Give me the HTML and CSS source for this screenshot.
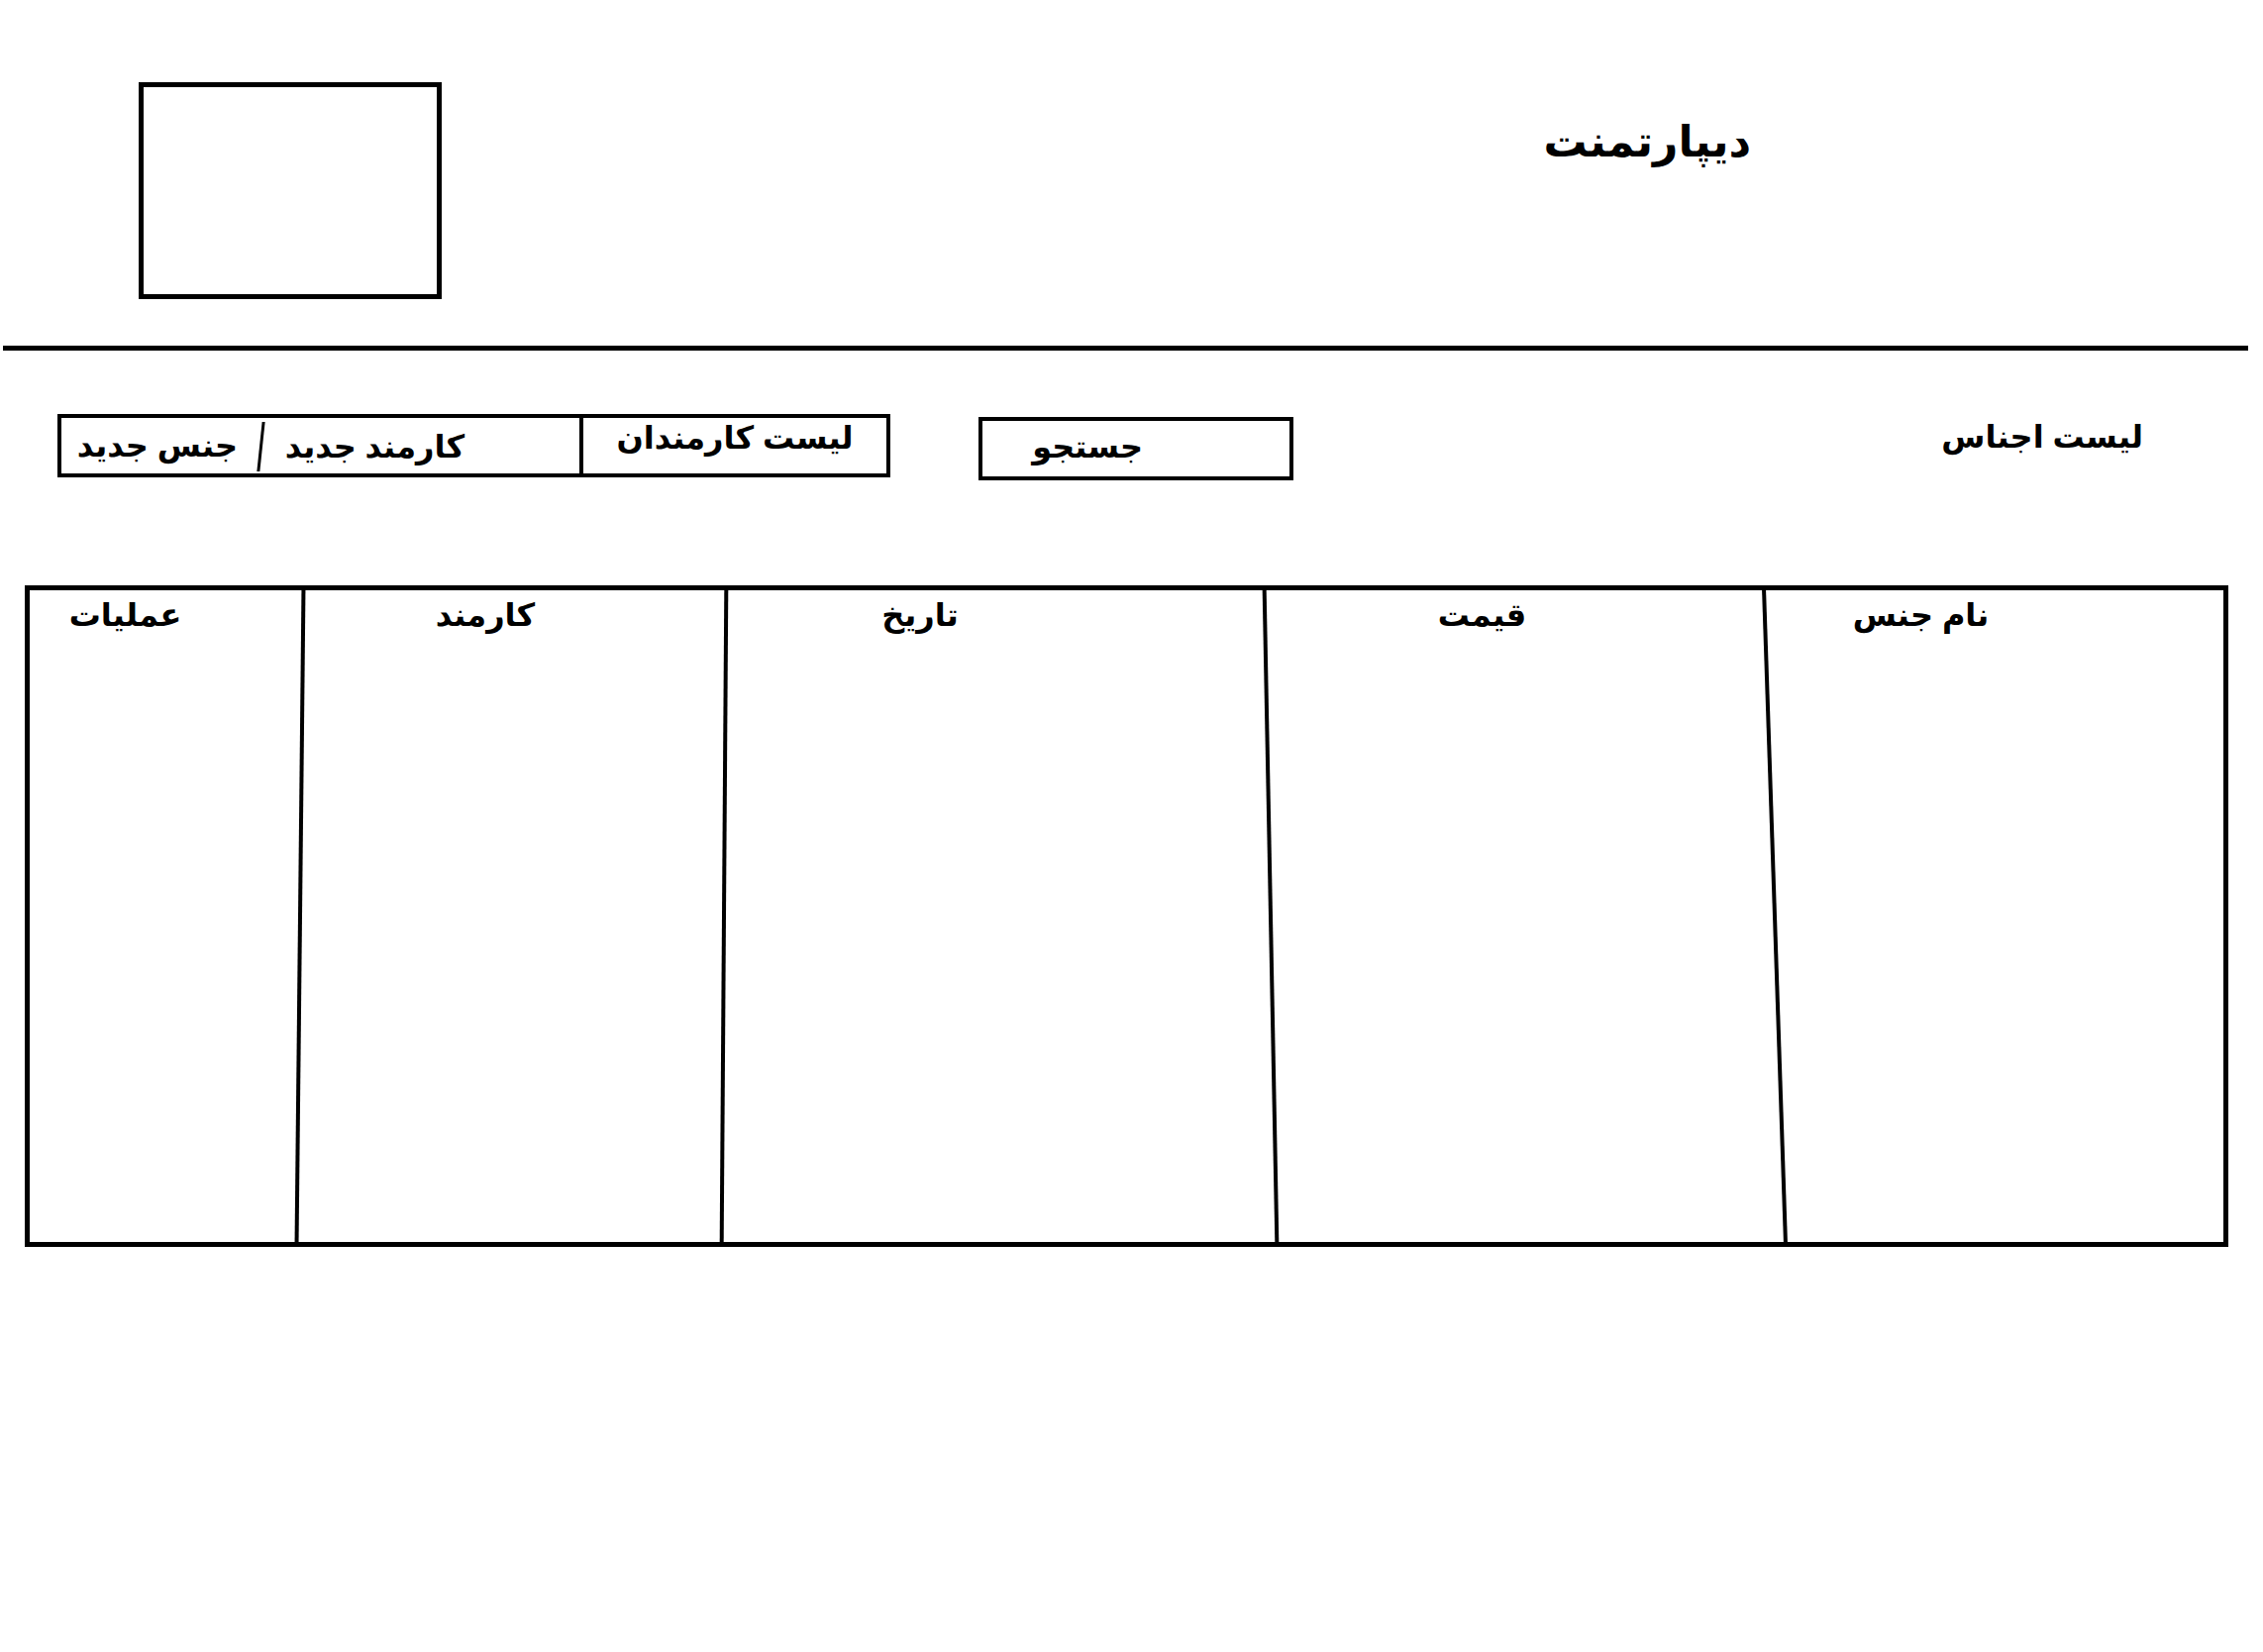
FILE: index.html
```html
<!DOCTYPE html>
<html lang="fa" dir="rtl">
<head>
    <meta charset="UTF-8">
    <meta name="viewport" content="width=device-width, initial-scale=1.0">
    <title>دیپارتمنت</title>
    <link rel="stylesheet" href="styles.css">
</head>
<body>
    <div class="header">
        <h1 class="title">دیپارتمنت</h1>
        <div class="logo"></div>
    </div>
    <div class="rule"></div>

    <div class="toolbar">
        <div class="section-label">لیست اجناس</div>
        <div class="search-box">جستجو</div>
        <div class="btn-group">
            <div class="btn-cell btn-list">لیست کارمندان</div>
            <div class="btn-cell btn-new-staff">کارمند جدید</div>
            <div class="btn-cell btn-new-item">جنس جدید</div>
        </div>
    </div>

    <div class="goods-table">
        <div class="col col-name"><div class="col-title">نام جنس</div></div>
        <div class="col col-price"><div class="col-title">قیمت</div></div>
        <div class="col col-date"><div class="col-title">تاریخ</div></div>
        <div class="col col-staff"><div class="col-title">کارمند</div></div>
        <div class="col col-ops"><div class="col-title">عملیات</div></div>
    </div>
</body>
</html>
```

FILE: styles.css
```css
body {
    margin: 0;
    background-color: #ffffff;
    color: #000000;
    font-family: "Liberation Sans", "DejaVu Sans", sans-serif;
    font-weight: bold;
}

.header {
    display: flex;
    justify-content: space-between;
    align-items: flex-start;
    padding: 83px 517px 0 140px;
}

.title {
    margin: 34px 0 0;
    font-size: 44px;
    line-height: 1.2;
}

.logo {
    width: 306px;
    height: 219px;
    border: 5px solid #000;
    box-sizing: border-box;
}

.rule {
    height: 5px;
    background-color: #000;
    margin: 47px 15px 0 3px;
}

/* ردیف دکمه ها */
.toolbar {
    display: flex;
    align-items: flex-start;
    margin-top: 64px;
    padding-right: 121px;
    font-size: 32px;
    white-space: nowrap;
}

.section-label {
    flex: none;
    width: 200px;
    padding-top: 4px;
    line-height: 1.2;
}

.search-box {
    flex: none;
    width: 318px;
    height: 64px;
    margin: 3px 658px 0 0;
    padding-right: 148px;
    border: 4px solid #000;
    box-sizing: border-box;
    line-height: 52px;
}

.btn-group {
    flex: none;
    display: grid;
    grid-template-columns: 310px 327px 1fr;
    width: 841px;
    height: 64px;
    margin-right: 89px;
    border: 4px solid #000;
    box-sizing: border-box;
}

.btn-cell {
    position: relative;
    line-height: 1.2;
}

.btn-list {
    text-align: center;
    padding-top: 1px;
    border-left: 4px solid #000;
}

.btn-new-staff {
    padding: 10px 116px 0 0;
}

.btn-new-item {
    padding: 9px 18px 0 0;
}

.btn-new-staff::after {
    content: "";
    position: absolute;
    left: 4px;
    top: 4px;
    bottom: 2px;
    width: 3px;
    background-color: #000;
    transform: skewX(-6deg);
}

/* جدول اجناس */
.goods-table {
    display: grid;
    grid-template-columns: 453px 509px 552px 428px 1fr;
    height: 668px;
    margin: 106px 35px 0 25px;
    border: 5px solid #000;
    box-sizing: border-box;
    font-size: 32px;
}

.col {
    position: relative;
}

.col + .col::before {
    content: "";
    position: absolute;
    top: 0;
    bottom: 0;
    right: -2px;
    width: 4px;
    background-color: #000;
}

.col-price::before { transform: skewX(1.9deg); }
.col-date::before { transform: skewX(1.1deg); }
.col-staff::before { transform: skewX(-0.4deg); }
.col-ops::before { transform: skewX(-0.6deg); }

.col-title {
    text-align: center;
    padding-top: 6px;
    line-height: 1.2;
}

.col-name .col-title { padding-right: 158px; }
.col-price .col-title { padding-right: 82px; }
.col-date .col-title { padding-right: 156px; }
.col-staff .col-title { padding-right: 54px; }
.col-ops .col-title { padding-right: 80px; }
```
